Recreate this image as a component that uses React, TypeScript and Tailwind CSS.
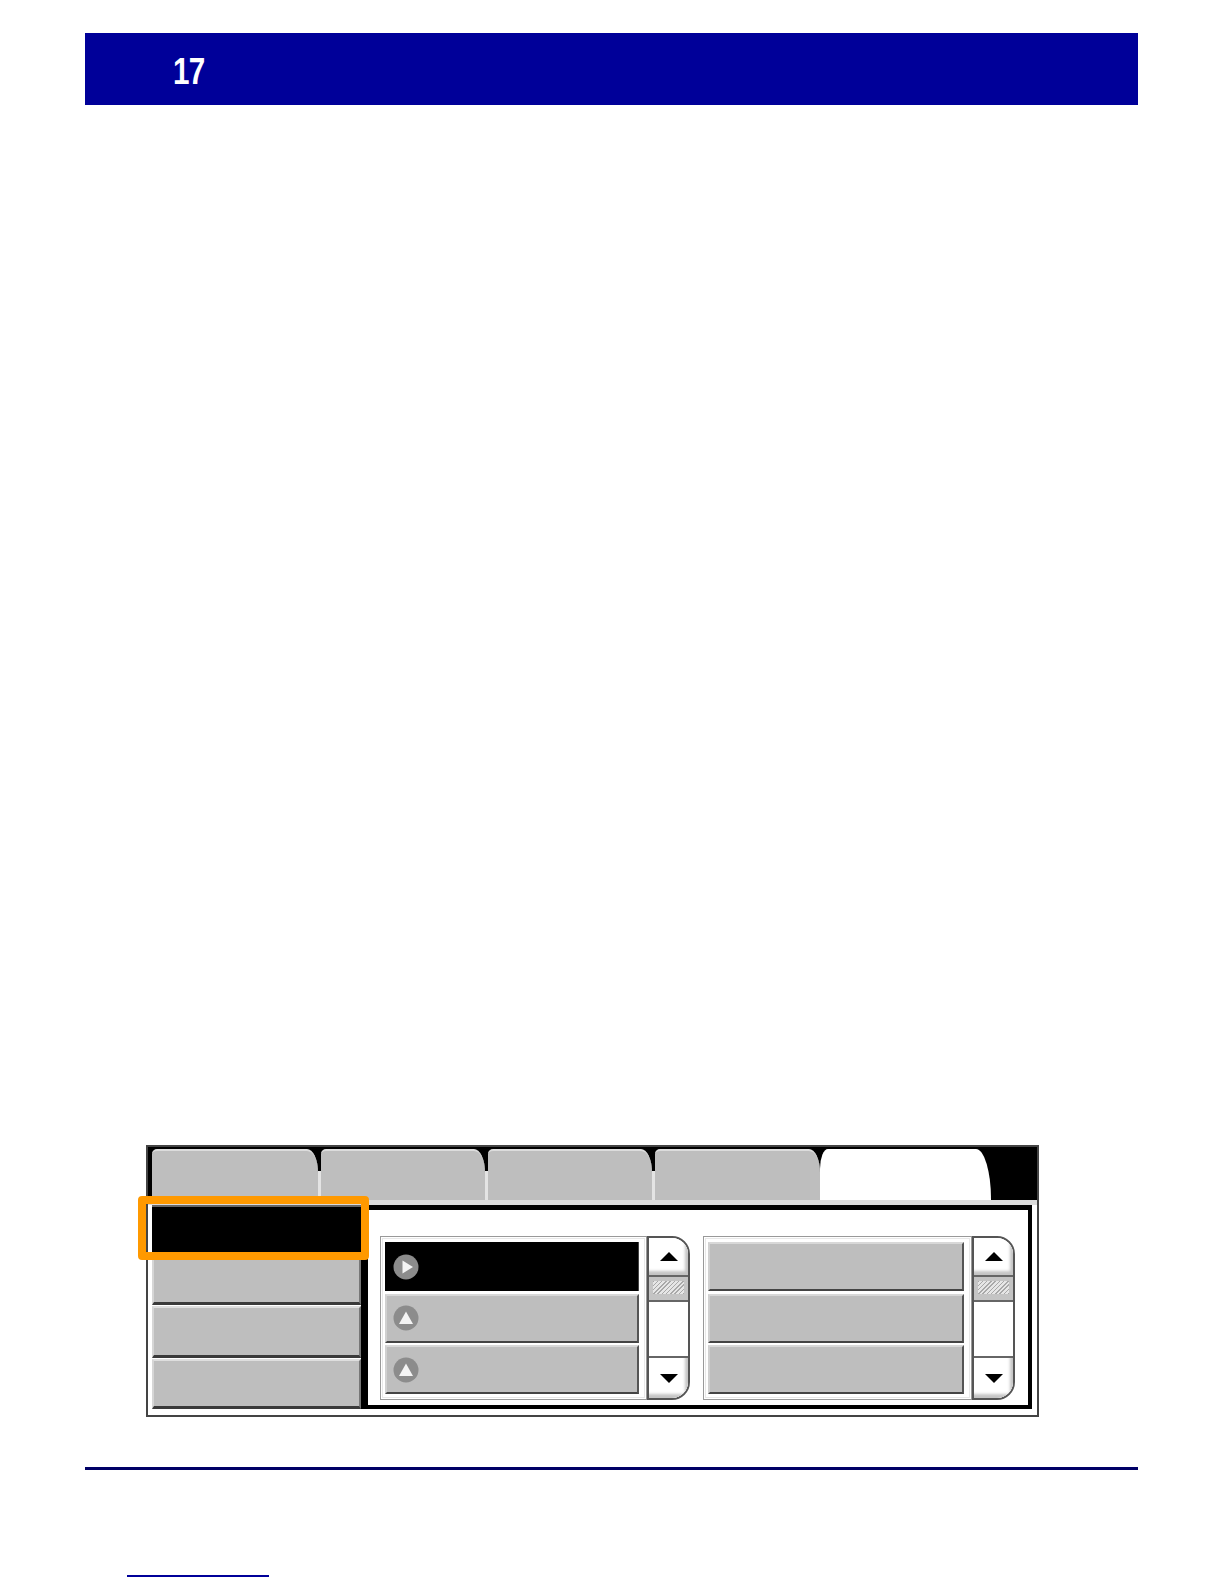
const sans = { fontFamily: '"Liberation Sans", Arial, sans-serif' };

const Tab = ({ className = '', last = false }: { className?: string; last?: boolean }) => (
  <>
    <div className={`h-[51px] rounded-tl-[5px] rounded-tr-[11px_23px] bg-[#bebebe] border-t-2 border-t-[#dcdcdc] ${className}`} />
    {!last && (
      <div className="w-[3px] h-[51px] flex flex-col">
        <div className="h-[22px] bg-black" />
        <div className="flex-1 bg-[#e4e4e4]" />
      </div>
    )}
  </>
);

const SideButton = ({ dark = false, className = '' }: { dark?: boolean; className?: string }) => (
  <div
    className={
      dark
        ? `w-[209px] bg-black border-t-2 border-[#666] ${className}`
        : `w-[209px] bg-[#bebebe] border-t-2 border-l-2 border-t-[#dedede] border-l-[#d6d6d6] border-b-[3px] border-r-2 border-b-[#3a3a3a] border-r-[#777] ${className}`
    }
  />
);

const RowIcon = ({ right = false }: { right?: boolean }) => (
  <svg width="26" height="26" viewBox="0 0 26 26" className="shrink-0">
    <circle cx="13" cy="13" r="12.5" fill="#8c8c8c" />
    {right ? <polygon points="9.5,6.5 20,13 9.5,19.5" fill="#f4f4f4" /> : <polygon points="13,6.5 20,19 6,19" fill="#f4f4f4" />}
  </svg>
);

const Row = ({ dark = false, icon = false }: { dark?: boolean; icon?: boolean }) => (
  <div
    className={
      dark
        ? 'h-[49px] flex items-center pl-[8px] bg-black border-r border-r-[#444]'
        : 'h-[49px] flex items-center pl-[6px] bg-[#bebebe] border-t-2 border-l-2 border-t-[#d8d8d8] border-l-[#d0d0d0] border-b-2 border-r-2 border-b-[#444] border-r-[#555]'
    }
  >
    {icon && <RowIcon right={dark} />}
  </div>
);

const Arrow = ({ down = false }: { down?: boolean }) => (
  <svg width="20" height="11" viewBox="0 0 20 11">
    <polygon points={down ? '1,1 19,1 10,10' : '10,1 19,10 1,10'} fill="#000" />
  </svg>
);

const Scroller = () => (
  <div className="w-[43px] h-[164px] flex flex-col border-2 border-[#555] rounded-r-[18px] bg-white overflow-hidden">
    <div className="h-[39px] flex items-center justify-center bg-white border-b-2 border-b-[#666] shadow-[inset_-3px_-4px_3px_#c4c4c4]">
      <Arrow />
    </div>
    <div className="h-[25px] bg-[#c4c4c4] border-b-2 border-b-[#666] p-[4px]">
      <div className="h-[13px] bg-[repeating-linear-gradient(135deg,#a8a8a8_0,#a8a8a8_1px,#e6e6e6_1px,#e6e6e6_3px)]" />
    </div>
    <div className="flex-1 bg-white" />
    <div className="h-[42px] flex items-center justify-center bg-white border-t-2 border-t-[#666] shadow-[inset_-3px_-4px_3px_#c4c4c4]">
      <Arrow down />
    </div>
  </div>
);

const ListGroup = ({ width, icons = false }: { width: string; icons?: boolean }) => (
  <div className="flex">
    <div className={`h-[164px] ${width} border border-[#999] pt-[5px] pb-[5px] pl-[4px] pr-[7px] flex flex-col gap-[2.5px] outline-1 -outline-offset-3 outline-[#e8e8e8]`}>
      <Row dark={icons} icon={icons} />
      <Row icon={icons} />
      <Row icon={icons} />
    </div>
    <Scroller />
  </div>
);

export default function App() {
  return (
    <div className="w-[1224px] h-[1584px] bg-white flex flex-col overflow-hidden" style={sans}>
      <div className="mt-[33px] ml-[85px] w-[1053px] h-[72px] shrink-0 bg-[#000099] flex items-center pl-[88px] pt-[4px]">
        <span className="text-white font-bold text-[37px] leading-none scale-x-[0.8] origin-left tracking-[-1px]">17</span>
      </div>

      <div className="relative mt-[1040px] ml-[146px] w-[893px] h-[272px] shrink-0 border-2 border-[#444] flex flex-col">
        <div className="bg-black shrink-0">
          <div className="flex pl-[4px] pt-[2px]">
            <Tab className="w-[166px]" />
            <Tab className="w-[164px]" />
            <Tab className="w-[164px]" />
            <Tab className="w-[165px]" last />
            <div className="h-[51px] w-[171px] bg-white rounded-tl-[8px_20px] rounded-tr-[15px_50px]" />
          </div>
          <div className="h-[5px] bg-[#dcdcdc]" />
        </div>

        <div className="flex-1 flex bg-white pr-[5px] pb-[6px]">
          <div className="w-[213px] pl-[4px] flex flex-col">
            <SideButton dark className="h-[48px]" />
            <SideButton className="h-[52px]" />
            <SideButton className="h-[52px] mt-[1px]" />
            <SideButton className="flex-1 mt-[1px]" />
          </div>
          <div className="flex-1 bg-white border-[4px] border-t-[5px] border-l-[7px] border-black pt-[26px] pl-[12px] flex gap-[13px]">
            <ListGroup width="w-[267px]" icons />
            <ListGroup width="w-[269px]" />
          </div>
        </div>

        <div className="absolute left-[-10px] top-[49px] w-[231px] h-[64px] border-[8px] border-[#ff9900] rounded-[4px]" />
      </div>

      <div className="mt-[50px] ml-[85px] w-[1053px] h-[3px] shrink-0 bg-[#000066]" />
      <div className="mt-[105px] ml-[127px] w-[142px] h-[2px] shrink-0 bg-[#000099]" />
    </div>
  );
}
